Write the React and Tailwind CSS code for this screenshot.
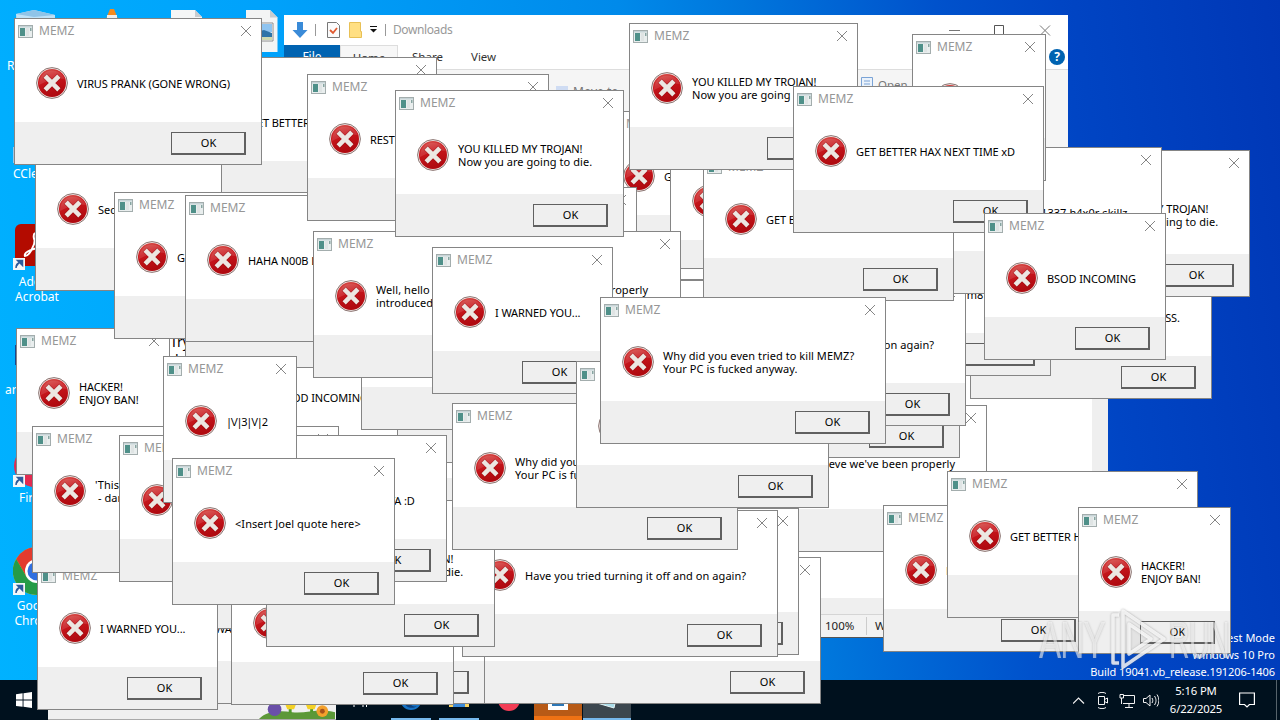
const TROJAN = ['YOU KILLED MY TROJAN!', 'Now you are going to die.'];
const HAX = ['GET BETTER HAX NEXT TIME xD'];
const HACKER = ['HACKER!', 'ENJOY BAN!'];
const WARNED = ['I WARNED YOU...'];
const BONZI = ["Well, hello there. I don't believe we've been properly", "introduced. I'm Bonzi!"];
const WHY = ['Why did you even tried to kill MEMZ?', 'Your PC is fucked anyway.'];
const AGAIN = ['Have you tried turning it off and on again?'];
const REST = ['REST IN PISS, FOREVER MISS.'];
const N00B = ['HAHA N00B L2P G3T REKT'];
const JOEL = ['<Insert Joel quote here>'];

// painted in order, the last one is on top
const dialogs = [
  { x: 186, y: 57, w: 251, lines: HAX },
  { x: 35, y: 144, w: 187, lines: ['SecureBoot sucks.'] },
  { x: 601, y: 111, w: 251, lines: HAX },
  { x: 386, y: 187, w: 251, lines: [] },
  { x: 670, y: 136, w: 229, lines: [] },
  { x: 970, y: 252, w: 242, lines: REST },
  { x: 1021, y: 150, w: 229, lines: TROJAN },
  { x: 883, y: 229, w: 168, lines: ['gr8 m8 i r8 8/8'] },
  { x: 620, y: 405, w: 367, lines: BONZI },
  { x: 780, y: 311, w: 180, lines: [] },
  { x: 600, y: 268, w: 200, lines: [] },
  { x: 650, y: 279, w: 316, lines: AGAIN },
  { x: 600, y: 280, w: 200, lines: [] },
  { x: 884, y: 147, w: 278, lines: ['You failed at your 1337 h4x0r skillz.'] },
  { x: 703, y: 154, w: 251, lines: HAX },
  { x: 400, y: 374, w: 150, lines: [] },
  { x: 380, y: 316, w: 200, lines: [] },
  { x: 216, y: 332, w: 182, lines: ['BSOD INCOMING'] },
  { x: 361, y: 283, w: 307, lines: [] },
  { x: 185, y: 221, w: 221, lines: [] },
  { x: 16, y: 328, w: 154, lines: HACKER },
  { x: 114, y: 192, w: 251, lines: HAX },
  { x: 185, y: 195, w: 221, lines: N00B },
  { x: 307, y: 74, w: 242, lines: REST },
  { x: 313, y: 231, w: 368, lines: BONZI },
  { x: 395, y: 90, w: 229, lines: TROJAN },
  { x: 432, y: 247, w: 181, lines: WARNED },
  { x: 470, y: 557, w: 351, lines: [] },
  { x: 560, y: 508, w: 239, lines: [] },
  { x: 104, y: 557, w: 381, lines: ['YOU TRIED SO HARD AND GOT SO FAR, BUT IN THE END,', 'YOUR PC WAS STILL FUCKED!'] },
  { x: 462, y: 510, w: 316, lines: AGAIN },
  { x: 100, y: 482, w: 300, lines: [] },
  { x: 231, y: 558, w: 223, lines: JOEL },
  { x: 266, y: 500, w: 229, lines: TROJAN },
  { x: 37, y: 563, w: 181, lines: WARNED },
  { x: 452, y: 403, w: 286, lines: WHY },
  { x: 576, y: 361, w: 253, lines: [] },
  { x: 600, y: 297, w: 286, lines: WHY },
  { x: 32, y: 426, w: 307, lines: ["'This is everything I want in my computer'", ' - danooct1 2016'] },
  { x: 119, y: 435, w: 328, lines: ['HAVE FUN TRYING TO RESTORE YOUR DATA :D'] },
  { x: 163, y: 356, w: 134, lines: ['|\\/|3|\\/|2'] },
  { x: 172, y: 458, w: 223, lines: JOEL },
  { x: 14, y: 18, w: 248, lines: ['VIRUS PRANK (GONE WRONG)'] },
  { x: 912, y: 34, w: 134, lines: ['|\\/|3|\\/|2'] },
  { x: 629, y: 23, w: 229, lines: TROJAN },
  { x: 793, y: 86, w: 251, lines: HAX },
  { x: 984, y: 213, w: 182, lines: ['BSOD INCOMING'] },
  { x: 883, y: 505, w: 209, lines: N00B },
  { x: 947, y: 471, w: 251, lines: HAX },
  { x: 1078, y: 507, w: 153, lines: HACKER },
];

// mixed case runs a little wider than the all caps messages
function tracking(line) {
  if (line.startsWith('|')) return 'tracking-[-1.25px]';
  return /[a-z]{2}/.test(line) ? 'tracking-[0.06px]' : 'tracking-[-0.1px]';
}

function CloseIcon() {
  return (
    <svg className="h-[10px] w-[10px]" viewBox="0 0 10 10" stroke="#858585" strokeWidth="1">
      <path d="M0 0l10 10M10 0l-10 10" />
    </svg>
  );
}

function AppIcon() {
  return (
    <svg className="h-[13px] w-[15px]" viewBox="0 0 15 13">
      <rect x="0.5" y="0.5" width="14" height="12" fill="#e9eeee" stroke="#a3adad" />
      <rect x="1" y="1" width="13" height="1.5" fill="#c6d3d6" />
      <rect x="2" y="3" width="5" height="8" fill="#4f9089" />
      <rect x="8" y="3" width="3" height="8" fill="#dfe4e4" />
      <rect x="12" y="3" width="1.5" height="3" fill="#88a5a2" />
    </svg>
  );
}

function ErrorIcon() {
  return (
    <svg className="h-8 w-8 shrink-0" viewBox="0 0 32 32">
      <circle cx="16" cy="16" r="15.4" fill="#f3e6e4" stroke="#8b7774" strokeWidth="1" />
      <circle cx="16" cy="16" r="14" fill="url(#errorRed)" />
      <path d="M3 18a13.5 13.5 0 0 1 26-6c-8-1-17 1-26 6z" fill="#fff" opacity=".12" />
      <path d="M10.8 10.8l10.4 10.4M21.2 10.8L10.8 21.2" stroke="#7d0d10" strokeWidth="6" strokeLinecap="square" opacity=".35" />
      <path d="M10.8 10.8l10.4 10.4M21.2 10.8L10.8 21.2" stroke="#ece7e2" strokeWidth="4.6" strokeLinecap="square" />
    </svg>
  );
}

function Dialog({ x, y, w, lines }) {
  return (
    <div
      className="absolute flex h-[147px] flex-col border border-[#858585] bg-white"
      style={{ left: x, top: y, width: w }}
    >
      <div className="flex h-6 shrink-0 items-center gap-[6px] pr-[10px] pl-[3px]">
        <AppIcon />
        <span className="flex-1 text-[12px] leading-none text-[#969696]">MEMZ</span>
        <CloseIcon />
      </div>
      <div className="flex flex-1 items-center gap-[9px] overflow-hidden pl-[21px]">
        <ErrorIcon />
        <div className={`text-[11px] leading-[13px] whitespace-pre text-black ${lines.length > 1 ? '' : 'pt-0.5'}`}>
          {lines.map((line) => (
            <p key={line} className={tracking(line)}>{line}</p>
          ))}
        </div>
      </div>
      <div className="flex h-[42px] shrink-0 items-start justify-end bg-[#efefef] pt-[10px] pr-[15px]">
        <button className="h-[23px] w-[75px] border border-r-2 border-b-2 border-[#606060] bg-[#efefef] pb-0.5 pl-px text-[11px] leading-none text-black">
          OK
        </button>
      </div>
    </div>
  );
}

function Shortcut() {
  return (
    <svg className="h-3 w-3" viewBox="0 0 12 12">
      <rect width="12" height="12" fill="#f4f6f8" />
      <path d="M3 10c0-4 1-5 4-5.500M4.500 2.500H9.500V7.500z" fill="#2d5b9c" stroke="#2d5b9c" strokeWidth="1.500" />
    </svg>
  );
}

function Desktop() {
  return (
    <div className="absolute inset-0 text-[12px] leading-[15px] text-white">
      <span className="absolute top-[58px] left-[7px]">Recycle Bin</span>
      <svg className="absolute top-[9px] left-[14px] h-12 w-64" viewBox="0 0 256 48">
        <path d="M2 5L20 1l21 5v20H3z" fill="#bfe2f7" />
        <path d="M2 5l18 3 21-2-21-5z" fill="#8fc4e8" />
        <path d="M92 10l4-10h4l4 10z" fill="#f58a1c" />
        <path d="M93 6h10v3H93z" fill="#eee" />
        <path d="M157 1h24l7 7v34h-31z" fill="#f5f6f6" />
        <path d="M181 1v7h7z" fill="#c8cccf" />
      </svg>
      <svg className="absolute top-[10px] left-[246px] h-[42px] w-8" viewBox="0 0 32 42">
        <path d="M0 0h24l7.500 7.500V42H0z" fill="#f3f4f4" />
        <path d="M24 0v7.500h7.500z" fill="#c8cccf" />
        <path d="M9 13h18v18H9z" fill="#fff" stroke="#8c8c8c" />
        <path d="M10 14h16v8H10z" fill="#8fc4f0" />
        <path d="M10 22l8-2 8 3v5H10z" fill="#2d74a8" />
        <path d="M10 27h16v3H10z" fill="#cdd9b0" />
      </svg>
      <svg className="absolute top-[147px] left-[13px] h-4 w-8" viewBox="0 0 32 16">
        <rect width="14" height="16" fill="#9bc6e6" />
      </svg>
      <span className="absolute top-[166px] left-[13px]">CCleaner</span>
      <div className="absolute top-[224px] left-[15px] h-[42px] w-[42px] rounded-md bg-[#b30b00]">
        <svg className="h-full w-full" viewBox="0 0 42 42" fill="none" stroke="#fff" strokeWidth="2">
          <path d="M20 9c-3 2 0 10 2 13M20 14c0 8-6 18-10 18-2-4 10-9 20-8" />
        </svg>
      </div>
      <div className="absolute top-[258px] left-[13px]">
        <Shortcut />
      </div>
      <p className="absolute top-[274px] left-0 w-[74px] text-center">
        Adobe
        <br />
        Acrobat
      </p>
      <div className="absolute top-[345px] left-[15px] h-5 w-8 bg-[#17458f]" />
      <span className="absolute top-[382px] left-[5px]">areaslist</span>
      <div className="absolute top-[445px] left-[14px] h-[42px] w-[42px] rounded-full bg-[#e22b50]" />
      <div className="absolute top-[475px] left-[13px]">
        <Shortcut />
      </div>
      <span className="absolute top-[490px] left-[19px]">Firefox</span>
      <svg className="absolute top-[547px] left-[13px] h-12 w-12" viewBox="0 0 48 48">
        <circle cx="24" cy="24" r="24" fill="#fbc116" />
        <path d="M3.200 12A24 24 0 0 1 44.800 12H24L13.600 30z" fill="#e33b2e" />
        <path d="M3.200 12A24 24 0 0 0 24 48L34 30H13.600z" fill="#259b48" />
        <circle cx="24" cy="24" r="12" fill="#fff" />
        <circle cx="24" cy="24" r="9.500" fill="#2f6fe0" />
      </svg>
      <div className="absolute top-[583px] left-[13px]">
        <Shortcut />
      </div>
      <p className="absolute top-[598px] left-0 w-[74px] text-center">
        Google
        <br />
        Chrome
      </p>
      <div className="absolute top-[629px] right-[5px] text-right text-[11px] leading-[17px]">
        <p>Test Mode</p>
        <p>Windows 10 Pro</p>
        <p className="tracking-[-0.08px] whitespace-nowrap">Build 19041.vb_release.191206-1406</p>
      </div>
    </div>
  );
}

function Explorer() {
  return (
    <div className="absolute top-[15px] left-[284px] flex h-[400px] w-[784px] flex-col bg-white text-[12px] text-[#333]">
      <div className="flex h-[30px] items-center pl-2">
        <svg className="h-4 w-4" viewBox="0 0 16 16">
          <path d="M5 0h6v8h4.500L8 16 .5 8H5z" fill="#3a8bd8" />
        </svg>
        <span className="mx-[7px] h-3 w-px bg-[#999]" />
        <svg className="ml-[4px] h-4 w-[13px]" viewBox="0 0 13 16">
          <path d="M.5.5h9l3 3v12H.5z" fill="#fbfbfb" stroke="#777" />
          <path d="M3 8l3 3 4-5" fill="none" stroke="#e0592f" strokeWidth="1.800" />
        </svg>
        <svg className="ml-[9px] h-4 w-[13px]" viewBox="0 0 13 16">
          <path d="M.5.5h11v9h1v6H.5z" fill="#ffdf83" stroke="#e8c055" />
        </svg>
        <svg className="ml-[8px] h-2 w-[7px]" viewBox="0 0 7 8">
          <path d="M0 .5h7" stroke="#111" />
          <path d="M0 3h7L3.500 6.500z" fill="#111" />
        </svg>
        <span className="mr-[7px] ml-[8px] h-3 w-px bg-[#999]" />
        <span className="flex-1 tracking-[-0.4px] text-[#999]">Downloads</span>
        <svg className="mr-[17px] h-[11px] w-[102px]" viewBox="0 0 102 11" fill="none" stroke="#777">
          <path d="M0 5.500h11M91 .5l10 10M101 .5l-10 10" />
          <path d="M45.500.5h9v9h-9z" stroke="#555" />
        </svg>
      </div>
      <div className="flex h-[24px] items-center">
        <span className="flex h-full w-14 items-center justify-center bg-[#0063b1] text-white">File</span>
        <span className="flex h-full w-[58px] items-center justify-center border border-b-0 border-[#ddd] bg-[#f7f7f7] text-[11.5px]">Home</span>
        <span className="w-[59px] text-center text-[11.5px]">Share</span>
        <span className="flex-1 pl-[14px] text-[11.5px]">View</span>
        <span className="mr-[3px] flex h-4 w-4 items-center justify-center rounded-full bg-[#0063b1] text-[12px] font-bold text-white">?</span>
      </div>
      <div className="flex h-[92px] items-start border-t border-[#ddd] bg-[#f5f5f5] pt-[7px] pl-[272px] text-[#777]">
        <span className="mt-[9px] h-4 w-3 bg-[#cfdcf3]" />
        <span className="mt-[6px] w-[293px] pl-[5px]">Move to</span>
        <svg className="h-[14px] w-3" viewBox="0 0 12 14">
          <path d="M.5.5h11v13H.5z" fill="#eaf2fb" stroke="#7aa3d6" />
          <path d="M3 4h6M3 7h6M3 10h6" stroke="#7aa3d6" />
        </svg>
        <span className="pl-[5px] text-[11.5px] leading-4">Open</span>
      </div>
    </div>
  );
}

function Notepad() {
  return (
    <div className="absolute top-[300px] left-[160px] flex h-[338px] w-[948px] flex-col border-b border-[#555] bg-white">
      <div className="flex flex-1">
        <p className="flex-1 pt-[33px] pl-[10px] text-[14px] leading-[18px] text-black">
          Try
          <br />
          do
        </p>
        <div className="w-4 bg-[#efefef]" />
      </div>
      <div className="h-4 bg-[#efefef]" />
      <div className="flex h-[23px] items-center border-t border-[#d5d5d5] bg-[#f2f2f2] pl-[665px] text-[11.5px] text-[#222]">
        <span className="w-[42px] border-r border-[#ccc]">100%</span>
        <span className="pl-2">Windows (CRLF)</span>
      </div>
    </div>
  );
}

function Taskbar() {
  return (
    <div className="absolute bottom-0 left-0 flex h-10 w-full bg-[#00111e] text-white">
      <div className="flex w-12 items-center justify-center">
        <svg className="h-4 w-4" viewBox="0 0 16 16" fill="#fff">
          <path d="M0 2.200L6.600 1.300v6.300H0zM7.500 1.200L16 0v7.600H7.500zM0 8.500h6.600v6.300L0 13.900zM7.500 8.500H16V16l-8.500-1.200z" />
        </svg>
      </div>
      <div className="flex w-72 justify-end border-b border-[#aaa] bg-[#f0f0f0]">
        <svg className="h-full w-[78px]" viewBox="0 0 78 40">
          <path d="M0 40c8-8 20-9 34-7s28-5 44 0v7z" fill="#5c9838" />
          <path d="M32 34v-8M54 33v-8" stroke="#4f9a2a" strokeWidth="3" />
          <path d="M25 20l4 10h7l4-10-4 4-3-4-3 4zM46 20l4 10h7l4-10-4 4-3-4-3 4z" fill="#f4d126" />
          <circle cx="16" cy="30" r="7" fill="#6a4fa8" />
          <circle cx="65" cy="32" r="6" fill="#f3a12c" />
          <circle cx="65" cy="32" r="2.500" fill="#a8521a" />
        </svg>
      </div>
      <div className="flex w-[50px] items-center justify-center">
        <svg className="h-4 w-4" viewBox="0 0 16 16" fill="none" stroke="#fff">
          <path d="M1 1v3h9V1M1 15v-9h9v9M13.500 1v14" />
        </svg>
      </div>
      <div className="mr-2 ml-[5px] flex w-10 items-center justify-center border-b-2 border-[#76b9ed]">
        <svg className="h-6 w-6" viewBox="0 0 24 24">
          <circle cx="12" cy="12" r="11" fill="#1673c5" />
          <path d="M5 15c2-7 10-8 14-2-4-1-7 1-7 4 0 2 3 3 6 2-5 4-12 1-13-4z" fill="#0b3f7d" />
        </svg>
      </div>
      <div className="mr-[5px] flex w-10 items-center justify-center border-b-2 border-[#76b9ed]">
        <svg className="h-5 w-5" viewBox="0 0 20 20">
          <path d="M0 2h20v16H0z" fill="#fbd45f" />
          <path d="M4 12h12v6H4z" fill="#3b8bd9" />
        </svg>
      </div>
      <div className="flex w-[50px] items-center justify-center">
        <span className="h-[22px] w-[22px] rounded-full bg-[#f23d55]" />
      </div>
      <div className="flex w-12 items-center justify-center border-b-4 border-[#ee7214] bg-[#b75a16]">
        <span className="mt-1 flex h-5 w-5 items-end justify-center bg-white pb-1">
          <span className="h-1.5 w-3 bg-[#2d77b6]" />
        </span>
      </div>
      <div className="ml-px flex w-12 items-center justify-center border-b-2 border-[#76b9ed] bg-[#3c474f]">
        <svg className="h-5 w-6" viewBox="0 0 24 20">
          <path d="M5 1l17 4-3 14-17-5z" fill="#a9dce9" stroke="#e4f3f5" />
        </svg>
      </div>
      <div className="flex flex-1 items-center justify-end">
        <svg className="mr-[10px] h-[17px] w-[86px]" viewBox="0 0 86 17" fill="none" stroke="#f2f2f2">
          <path d="M0 11.500l5.500-5.500 5.500 5.500" strokeWidth="1.200" />
          <path d="M25.500 4.500h6v8h-6zM31.500 7.500l3-1.500v5l-3-1.500M25 1.500c2-1.500 6-1.500 8 0M25 15.500c2 1.500 6 1.500 8 0" />
          <path d="M51 3.500h10.500v8H50M56 11.500v4M52 15.500h8M47 2.500h3.500v3.500H47zM48.500 6v6" />
          <path d="M70.500 6.500h2.500l4-3.500v11l-4-3.500h-2.500zM79 6c1 1.500 1 3.500 0 5M81.500 4c2 3 2 6 0 9M84 2.500c2.500 4 2.500 8 0 12" />
        </svg>
        <div className="w-[54px] text-center text-[11.3px] leading-[18px] tracking-[-0.15px] whitespace-nowrap">
          <p>5:16 PM</p>
          <p>6/22/2025</p>
        </div>
        <svg className="mr-[21px] ml-[16px] h-4 w-4" viewBox="0 0 16 16" fill="none" stroke="#fff" strokeWidth="1.200">
          <path d="M.6 1h14.800v11.500h-5L8 15l-2.500-2.500H.6z" />
        </svg>
        <span className="mr-[3px] h-full w-px bg-[#56636b]" />
      </div>
    </div>
  );
}

function Watermark() {
  return (
    <div className="absolute top-[606px] left-[1039px] flex h-[68px] items-center font-['Liberation_Sans'] text-[52px] leading-none tracking-tight text-white/55 drop-shadow-[0_0_1px_rgba(90,90,90,0.6)]">
      <span className="w-[70px]">
        <span className="inline-block origin-left scale-x-[0.64]">ANY</span>
      </span>
      <svg className="h-[66px] w-[58px] shrink-0" viewBox="0 0 58 66" fill="none" stroke="#fff" strokeOpacity="0.8" strokeWidth="3.5" strokeLinejoin="round">
        <path d="M14 4L55 32 14 60z" />
        <path d="M20 17l22 15-22 15z" fill="#fff" fillOpacity="0.25" />
        <path d="M10 8H4v48h6" />
      </svg>
      <span className="ml-0.5 w-[60px]">
        <span className="inline-block origin-left scale-x-[0.55]">RUN</span>
      </span>
    </div>
  );
}

export default function App() {
  return (
    <div className="relative h-[720px] w-[1280px] overflow-hidden bg-[linear-gradient(82deg,#00b2ff_0%,#00a2fb_26%,#008aea_52%,#0076dc_61%,#0052cc_75%,#0045c4_84%,#0037b6_100%)] font-['Noto_Sans',sans-serif]">
      <svg className="absolute h-0 w-0">
        <linearGradient id="errorRed" x1="0" y1="0" x2="0.3" y2="1">
          <stop offset="0" stopColor="#d8564f" />
          <stop offset="0.45" stopColor="#c8161c" />
          <stop offset="1" stopColor="#b00a10" />
        </linearGradient>
      </svg>
      <Desktop />
      <Explorer />
      <Notepad />
      <Taskbar />
      {dialogs.map((d) => (
        <Dialog key={`${d.x}-${d.y}`} {...d} />
      ))}
      <Watermark />
    </div>
  );
}
